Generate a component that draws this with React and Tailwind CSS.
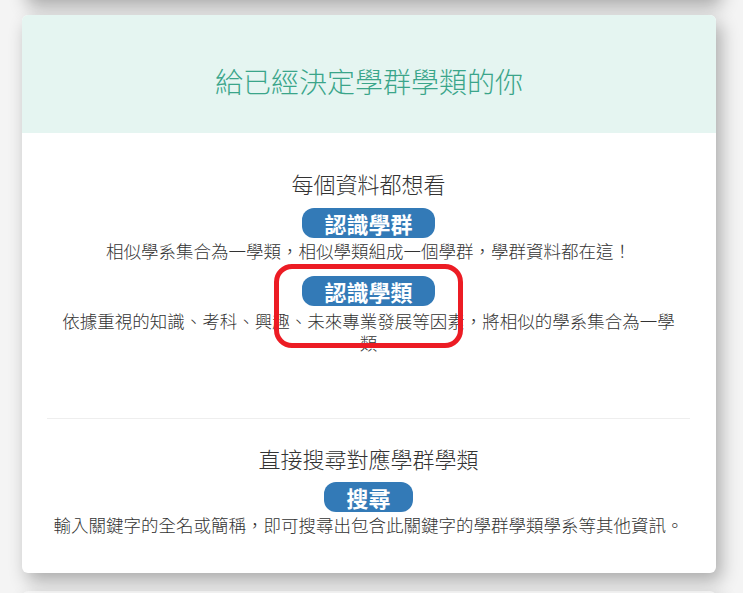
import React from 'react';

const font = { fontFamily: '"Noto Sans CJK TC", "Noto Sans", "Liberation Sans", sans-serif' };

const PillButton = ({ children }) => (
    <button className="inline-block h-[30px] px-[22px] rounded-[12px] bg-[#337ab7] text-white text-[22px] leading-[30px] font-bold">
        {children}
    </button>
);

const App = () => {
    return (
        <div
            className="h-[593px] overflow-hidden bg-[#f4f4f4] pl-[22px] pr-[27px] flex flex-col gap-[16px]"
            style={font}
        >
            {/* previous card, only its shadow shows at the top */}
            <div className="shrink-0 h-[100px] -mt-[101px] bg-white rounded-md shadow-[5px_8px_18px_rgba(0,0,0,0.3)]" />

            <div className="relative shrink-0 bg-white rounded-md overflow-hidden shadow-[5px_8px_18px_rgba(0,0,0,0.3)]">
                <div className="bg-[#e5f5f1] pt-[45px] pb-[31px] text-center">
                    <h2 className="text-[28px] leading-[42px] font-light text-[#3aa58a]">給已經決定學群學類的你</h2>
                </div>

                <div className="pl-[25px] pr-[26px] pt-[35px] pb-[37px] text-center text-[#333]">
                    <section className="px-[10px]">
                        <h3 className="text-[22px] leading-[30px] font-light">每個資料都想看</h3>
                        <div className="mt-[10px]">
                            <PillButton>認識學群</PillButton>
                        </div>
                        <p className="mt-[2px] text-[17.5px] leading-[22px] font-light">
                            相似學系集合為一學類，相似學類組成一個學群，學群資料都在這！
                        </p>
                        <div className="mt-[14px]">
                            <PillButton>認識學類</PillButton>
                        </div>
                        <p className="mt-[4px] text-[17.5px] leading-[22px] font-light">
                            依據重視的知識、考科、興趣、未來專業發展等因素，將相似的學系集合為一學類
                        </p>
                    </section>

                    <hr className="mt-[64px] border-0 border-t border-[#eeeeee]" />

                    <section className="mt-[24px]">
                        <h3 className="text-[22px] leading-[30px] font-light">直接搜尋對應學群學類</h3>
                        <div className="mt-[9px]">
                            <PillButton>搜尋</PillButton>
                        </div>
                        <p className="mt-[2px] text-[17.5px] leading-[22px] font-light">
                            輸入關鍵字的全名或簡稱，即可搜尋出包含此關鍵字的學群學類學系等其他資訊。
                        </p>
                    </section>
                </div>

                {/* red annotation mark */}
                <div className="pointer-events-none absolute left-[252px] top-[249px] w-[189px] h-[84px] border-[5px] border-[#ec1c24] rounded-[18px]" />
            </div>

            {/* next card, just its top edge */}
            <div className="shrink-0 mt-[2px] h-[100px] bg-[#f7f7f7] rounded-md shadow-[5px_8px_18px_rgba(0,0,0,0.3)]" />
        </div>
    );
};

export default App;
